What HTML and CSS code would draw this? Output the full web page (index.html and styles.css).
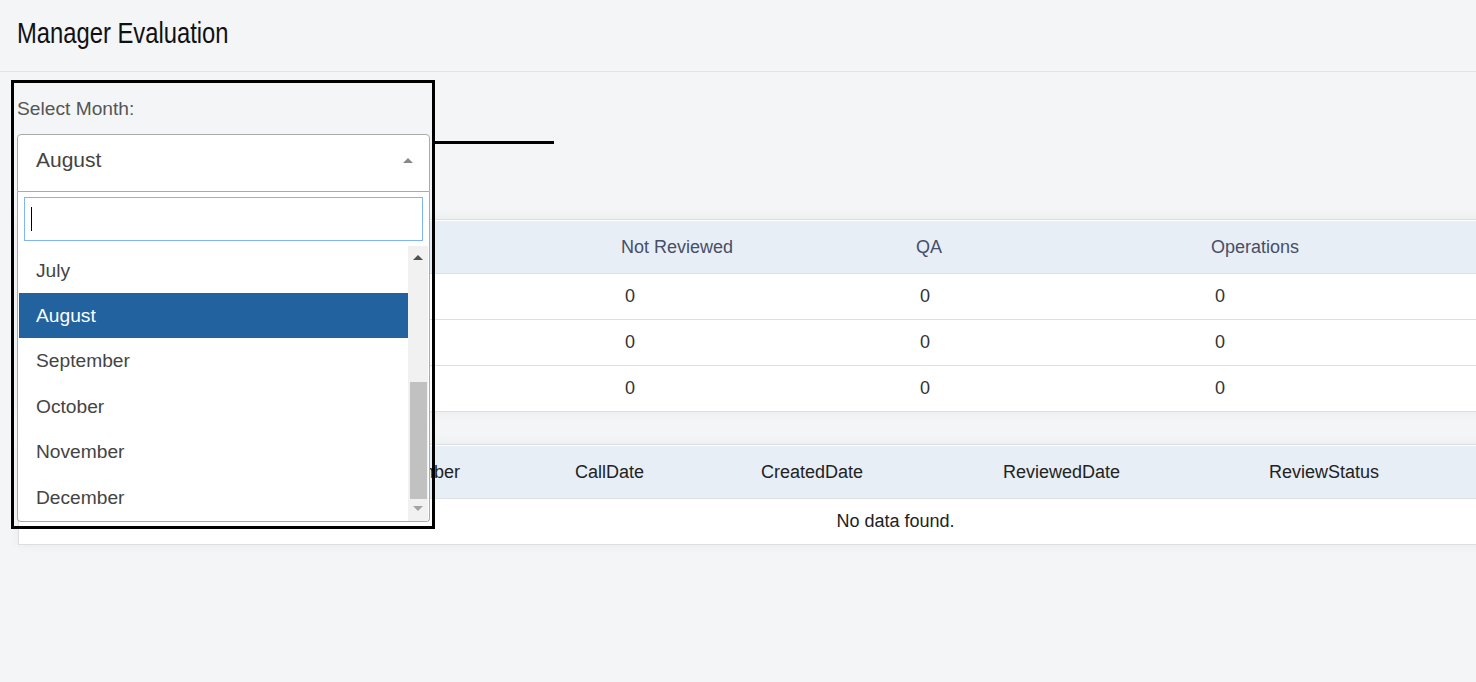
FILE: index.html
```html
<!DOCTYPE html>
<html lang="en">
<head>
  <meta charset="UTF-8" />
  <title>Manager Evaluation</title>
  <link rel="stylesheet" href="styles.css">
</head>
<body>
  <div class="page">
    <div class="page-header">
      <h1>Manager Evaluation</h1>
    </div>

    <div class="content">
      <div class="month-filter">
        <label class="filter-label">Select Month:</label>
        <div class="select2">
          <div class="select2-selection">
            <span class="selection-text">August</span>
            <span class="selection-arrow"></span>
          </div>
          <div class="select2-dropdown">
            <div class="search-box">
              <div class="search-field"><span class="caret"></span></div>
            </div>
            <div class="results">
              <ul class="options">
                <li>July</li>
                <li class="highlighted">August</li>
                <li>September</li>
                <li>October</li>
                <li>November</li>
                <li>December</li>
              </ul>
              <div class="scrollbar">
                <div class="sb-btn"><span class="tri-up"></span></div>
                <div class="sb-track"><div class="sb-thumb"></div></div>
                <div class="sb-btn"><span class="tri-down"></span></div>
              </div>
            </div>
          </div>
        </div>
      </div>

      <div class="card">
        <table class="summary">
          <colgroup>
            <col style="width:297px"><col style="width:297px"><col style="width:295px"><col style="width:295px"><col style="width:295px">
          </colgroup>
          <thead>
            <tr><th>Status</th><th>Total</th><th>Not Reviewed</th><th>QA</th><th>Operations</th></tr>
          </thead>
          <tbody>
            <tr><td>Pending</td><td>0</td><td>0</td><td>0</td><td>0</td></tr>
            <tr><td>Reviewed</td><td>0</td><td>0</td><td>0</td><td>0</td></tr>
            <tr><td>Closed</td><td>0</td><td>0</td><td>0</td><td>0</td></tr>
          </tbody>
        </table>
      </div>

      <div class="card">
        <table class="details">
          <colgroup>
            <col style="width:338px"><col style="width:210px"><col style="width:186px"><col style="width:242px"><col style="width:266px"><col style="width:511px">
          </colgroup>
          <thead>
            <tr><th>AgentName</th><th>CallNumber</th><th>CallDate</th><th>CreatedDate</th><th>ReviewedDate</th><th>ReviewStatus</th></tr>
          </thead>
          <tbody>
            <tr><td class="empty" colspan="6">No data found.</td></tr>
          </tbody>
        </table>
      </div>
    </div>

    <div class="callout"></div>
    <div class="callout-line"></div>
  </div>
</body>
</html>
```

FILE: styles.css
```css
html, body {
  margin: 0;
  padding: 0;
  overflow: hidden;
}

body {
  font-family: "Liberation Sans", Arial, sans-serif;
  background-color: #f4f5f7;
  color: #333;
  height: 100vh;
}

.page {
  position: relative;
  height: 100%;
}

.page-header {
  height: 72px;
  box-sizing: border-box;
  padding: 16px 0 0 17px;
  border-bottom: 1px solid #e2e3e6;
}

h1 {
  display: inline-block;
  margin: 0;
  font-family: "Liberation Sans", Arial, sans-serif;
  font-weight: normal;
  font-size: 29px;
  line-height: 35px;
  color: #111;
  transform: scaleX(0.82);
  transform-origin: left center;
}

.content {
  padding: 23px 0 0 17px;
}

.month-filter {
  margin-bottom: 27px;
}

.filter-label {
  display: block;
  font-size: 19.2px;
  line-height: 27px;
  color: #555;
  margin-bottom: 12px;
}

.select2 {
  position: relative;
  width: 413px;
}

.select2-selection {
  height: 58px;
  box-sizing: border-box;
  background-color: #fff;
  border: 1px solid #aaa;
  border-radius: 4px 4px 0 0;
  display: flex;
  align-items: center;
  justify-content: space-between;
  padding: 0 16px 0 18px;
}

.selection-text {
  font-size: 21px;
  line-height: 50px;
  color: #444;
  margin-bottom: 6px;
}

.selection-arrow {
  width: 0;
  height: 0;
  border-left: 5px solid transparent;
  border-right: 5px solid transparent;
  border-bottom: 5px solid #888;
  margin-bottom: 6px;
}

.select2-dropdown {
  position: absolute;
  top: 100%;
  left: 0;
  width: 100%;
  box-sizing: border-box;
  background-color: #fff;
  border: 1px solid #aaa;
  border-top: none;
  border-radius: 0 0 4px 4px;
  z-index: 10;
}

.search-box {
  padding: 5px 6px;
}

.search-field {
  height: 44px;
  box-sizing: border-box;
  border: 1px solid #7fb5f2;
  display: flex;
  align-items: center;
  padding-left: 6px;
}

.caret {
  width: 1px;
  height: 24px;
  background-color: #000;
}

.results {
  display: flex;
  height: 275px;
  padding: 0 1px;
}

.options {
  flex: 1;
  list-style: none;
  margin: 0;
  padding: 0 0 1px 0;
  overflow: hidden;
  display: flex;
  flex-direction: column;
  justify-content: flex-end;
}

.options li {
  flex: none;
  height: 45.4px;
  line-height: 45.4px;
  padding-left: 17px;
  font-size: 19.2px;
  color: #444;
}

.options li.highlighted {
  background-color: #21629f;
  color: #fff;
}

.scrollbar {
  width: 20px;
  background-color: #f1f1f1;
  display: flex;
  flex-direction: column;
}

.sb-btn {
  height: 22px;
  display: flex;
  align-items: center;
  justify-content: center;
}

.tri-up {
  width: 0;
  height: 0;
  border-left: 5px solid transparent;
  border-right: 5px solid transparent;
  border-bottom: 5px solid #505050;
  margin-top: 1px;
}

.tri-down {
  width: 0;
  height: 0;
  border-left: 5px solid transparent;
  border-right: 5px solid transparent;
  border-top: 5px solid #a3a3a3;
  margin-bottom: 3px;
}

.sb-track {
  flex: 1;
  display: flex;
  flex-direction: column;
  justify-content: flex-end;
  align-items: center;
}

.sb-thumb {
  width: 17px;
  height: 117px;
  background-color: #c1c1c1;
}

.card {
  width: max-content;
  margin-left: 1px;
  margin-bottom: 32px;
  padding-top: 1px;
  background-color: #fff;
  border: 1px solid #dcdee2;
  box-shadow: 0 0 10px rgba(0, 0, 0, 0.06);
}

table {
  border-collapse: collapse;
  table-layout: fixed;
  font-size: 18px;
}

th {
  height: 52px;
  padding: 0 8px;
  text-align: left;
  font-weight: normal;
  background-color: #e7eef6;
  border-bottom: 1px solid #dcdfe3;
}

td {
  height: 45px;
  padding: 0 12px;
  color: #333;
  border-bottom: 1px solid #dedede;
}

tbody tr:last-child td {
  border-bottom: none;
}

.summary th {
  color: #484e66;
}

.details th {
  color: #222;
}

.details td.empty {
  text-align: center;
  color: #222;
}

.callout {
  position: absolute;
  left: 11px;
  top: 80px;
  width: 424px;
  height: 449px;
  box-sizing: border-box;
  border: 3px solid #000;
  z-index: 20;
}

.callout-line {
  position: absolute;
  left: 435px;
  top: 141px;
  width: 119px;
  height: 3px;
  background-color: #000;
  z-index: 20;
}
```
